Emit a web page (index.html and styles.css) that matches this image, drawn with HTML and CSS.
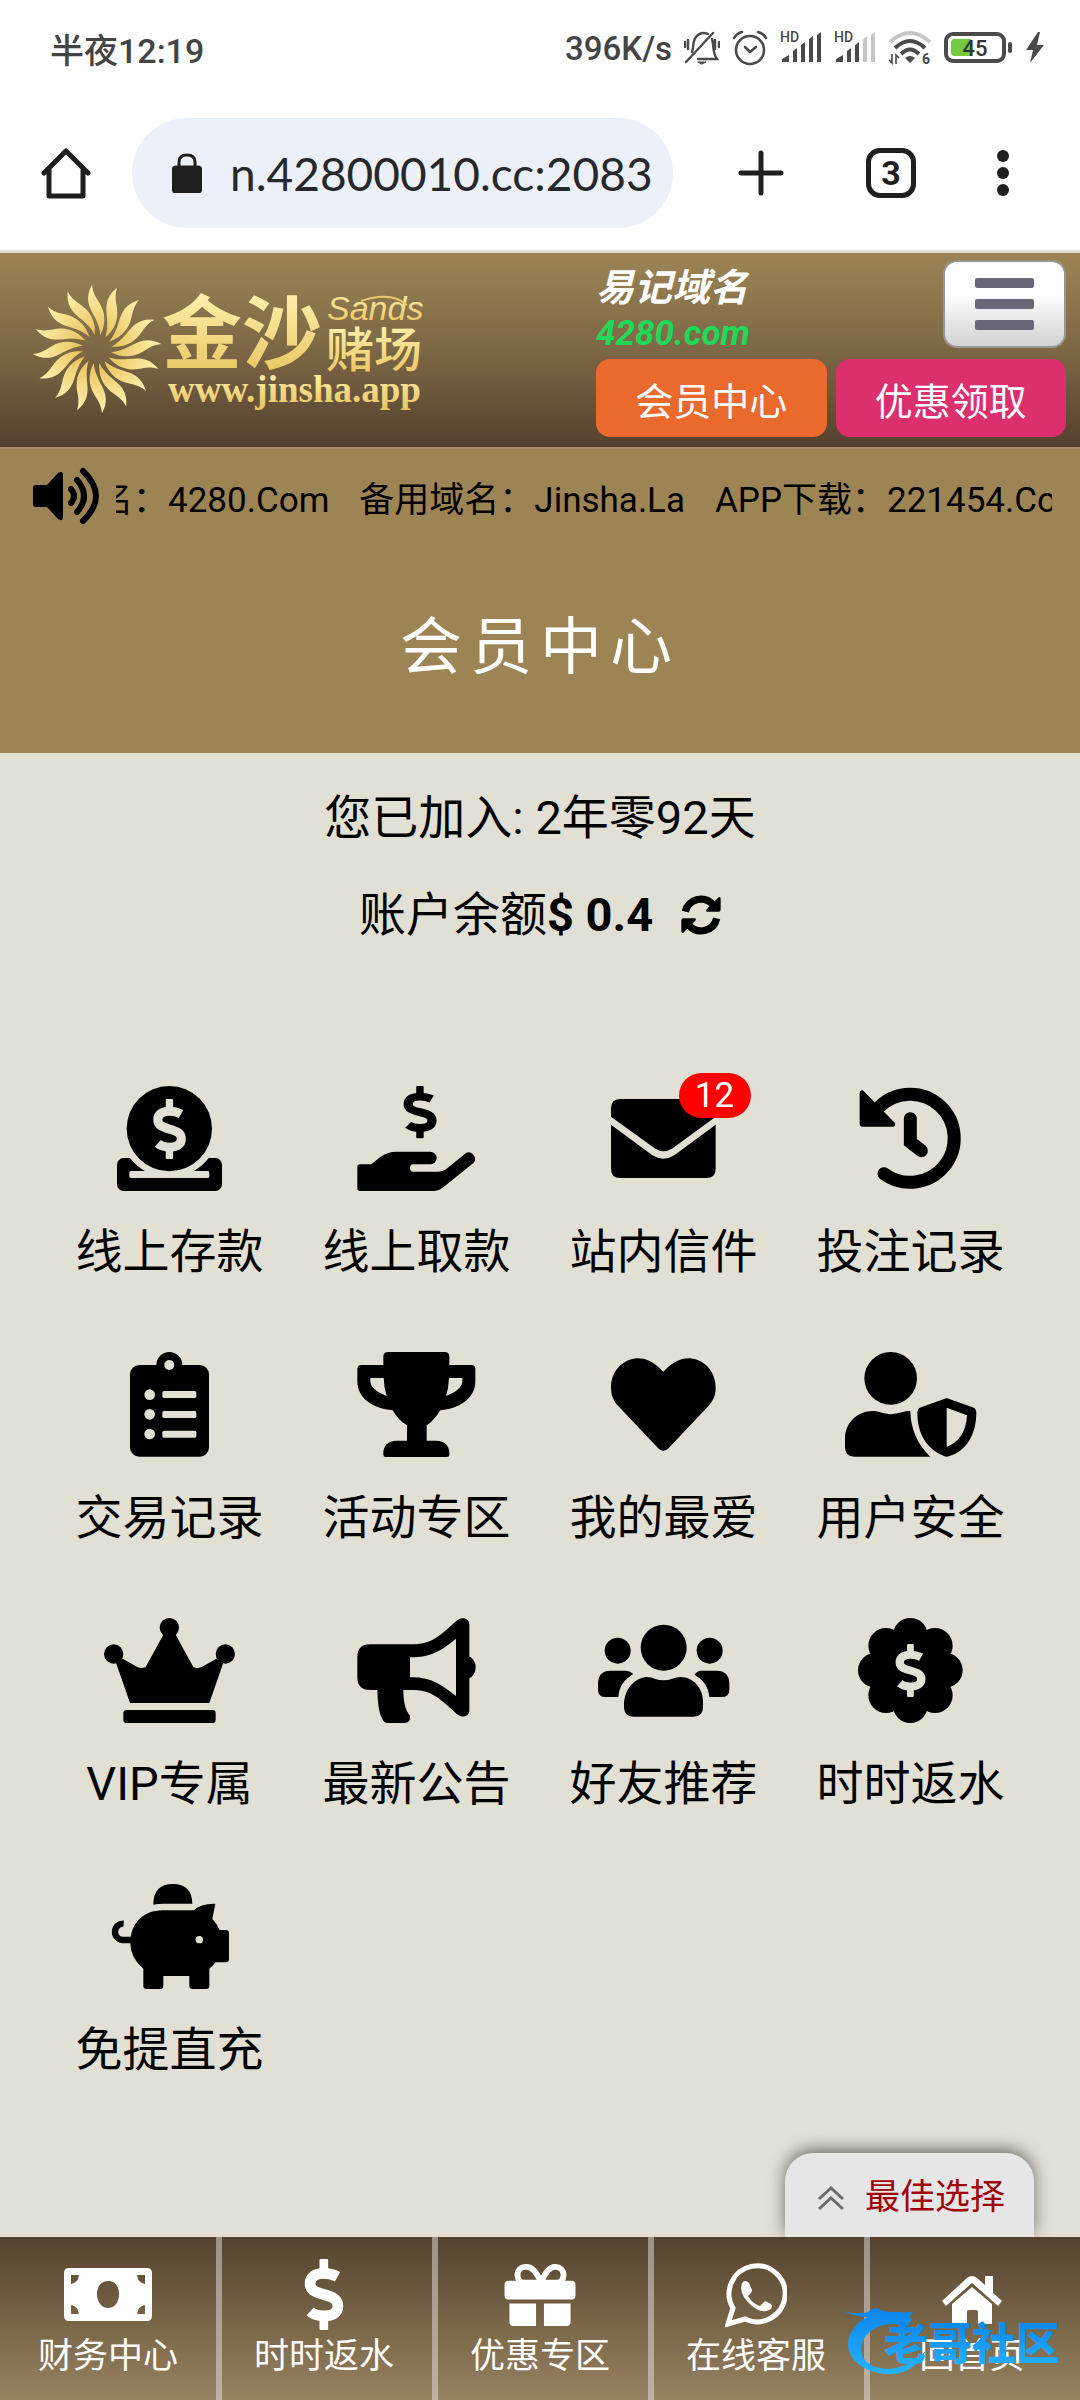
FILE: index.html
```html
<!DOCTYPE html>
<html lang="zh-CN">
<head>
    <meta charset="UTF-8">
    <meta name="viewport" content="width=device-width, initial-scale=1.0">
    <title>会员中心</title>
    <link rel="stylesheet" href="styles.css">
</head>
<body>
    <svg class="defs" width="0" height="0" aria-hidden="true">
        <defs>
            <linearGradient id="gold" x1="0" y1="0" x2="0" y2="1">
                <stop offset="0" stop-color="#fff3b0"/>
                <stop offset="1" stop-color="#e8c25c"/>
            </linearGradient>
            <linearGradient id="blue" x1="0" y1="0" x2="0" y2="1">
                <stop offset="0" stop-color="#0a84ec"/>
                <stop offset="1" stop-color="#25b4ff"/>
            </linearGradient>
            <path id="ray" d="M-15 -193C-38 -150 -22 -125 -8 -98C2 -78 8 -62 10 -42C20 -62 26 -85 19 -112C10 -145 -12 -155 -15 -193Z"/>
            <g id="dollar">
                <path d="M45 32V4q0-4 4-4h18q4 0 4 4v28zM45 180v28q0 4 4 4h18q4 0 4-4v-28z" fill="currentColor"/>
                <path d="M99 53C88 47 76 43 58 43C32 43 17 54 17 73C17 92 30 98 58 106C86 114 100 120 100 141C100 160 84 170 58 170C40 170 26 165 17 157" fill="none" stroke="currentColor" stroke-width="32"/>
            </g>
        </defs>
    </svg>

    <div class="status">
        <span class="time">半夜12:19</span>
        <div class="status-icons">
            <span class="speed">396K/s</span>
            <svg width="36" height="36" viewBox="0 0 36 36" fill="none" stroke="#4a4a4a" stroke-width="2.4" stroke-linecap="round">
                <path d="M2 32L29 3M8 22C10 18 8 12 12 7Q17 1 24 4M28 9C30 15 28 22 33 29H14M1 12v5M4 10v9M31 10v9M35 12v5"/>
                <path d="M14 32h8l-4 2z" fill="#4a4a4a" stroke-width="1"/>
            </svg>
            <svg width="36" height="36" viewBox="0 0 36 36" fill="none" stroke="#4a4a4a" stroke-width="2.6" stroke-linecap="round" stroke-linejoin="round">
                <circle cx="18" cy="20" r="14"/>
                <path d="M13 17l5 5 6-5M2 8Q5 3 10 2M34 8Q31 3 26 2"/>
            </svg>
            <svg width="42" height="36" viewBox="0 0 42 36" fill="#4a4a4a">
                <text x="0" y="12" class="tiny">HD</text>
                <path d="M2 32V29L9 25V32zM13 32V21L17 18V32zM21 32V15L25 12V32zM29 32V9L33 6V32zM37 32V5L41 2V32z"/>
            </svg>
            <svg width="42" height="36" viewBox="0 0 42 36" fill="#4a4a4a">
                <text x="0" y="12" class="tiny">HD</text>
                <path d="M2 32V29L9 25V32zM13 32V21L17 18V32zM21 32V15L25 12V32z"/>
                <path d="M29 32V9L33 6V32zM37 32V5L41 2V32z" fill="#c6c6c6"/>
            </svg>
            <svg width="44" height="40" viewBox="0 -2 44 40" fill="none" stroke="#4a4a4a" stroke-width="4">
                <path d="M2 12Q22-6 42 12" stroke="#c6c6c6"/>
                <path d="M7 18Q22 4 37 18M13 24Q22 15 31 24"/>
                <path d="M17 28Q22 24 27 28L22 33z" fill="#4a4a4a" stroke="none"/>
                <path d="M4 24V33L1 30M8 34V25L11 28" stroke-width="1.6"/>
                <text x="34" y="34" class="tiny-bold" fill="#4a4a4a" stroke="none">6</text>
            </svg>
            <svg width="70" height="36" viewBox="0 0 70 36">
                <rect x="2" y="4" width="58" height="27" rx="7" fill="#fff" stroke="#4a4a4a" stroke-width="4"/>
                <path d="M11 9h16v17H11q-4 0-4-4v-9q0-4 4-4z" fill="#74c83c"/>
                <rect x="64" y="12" width="4" height="11" rx="2" fill="#4a4a4a"/>
                <text x="31" y="26" text-anchor="middle" class="battery">45</text>
            </svg>
            <svg width="18" height="36" viewBox="0 0 18 36" fill="#4a4a4a"><path d="M12 2L0 20H7L4 33 18 15H11L14 2z"/></svg>
        </div>
    </div>

    <div class="browser">
        <button class="icon-btn" aria-label="主页">
            <svg width="50" height="52" viewBox="0 0 50 52" fill="none" stroke="#1f1f1f" stroke-width="5" stroke-linejoin="round" stroke-linecap="round"><path d="M3 26L25 4 47 26M8 23V49H42V23"/></svg>
        </button>
        <div class="address">
            <svg width="30" height="40" viewBox="0 0 30 40" fill="none" stroke="#1f1f1f" stroke-width="3"><rect x="1" y="14" width="28" height="25" rx="3" fill="#1f1f1f"/><path d="M7 15V9Q7 2 15 2T23 9V15"/></svg>
            <input type="text" value="n.42800010.cc:2083" aria-label="网址">
        </div>
        <div class="browser-actions">
            <button class="icon-btn" aria-label="新标签页">
                <svg width="50" height="50" viewBox="0 0 50 50" stroke="#1f1f1f" stroke-width="5" stroke-linecap="round"><path d="M25 5V45M5 25H45"/></svg>
            </button>
            <button class="tabs">3</button>
            <button class="icon-btn" aria-label="菜单">
                <svg width="14" height="48" viewBox="0 0 14 48" fill="#1f1f1f"><circle cx="7" cy="7" r="6"/><circle cx="7" cy="24" r="6"/><circle cx="7" cy="41" r="6"/></svg>
            </button>
        </div>
    </div>

    <header>
        <a class="logo" href="#" aria-label="金沙赌场">
            <svg width="420" height="150" viewBox="0 0 420 150">
                <g fill="url(#gold)" transform="translate(66 75) scale(.3333)">
                    <use href="#ray"/>
                    <use href="#ray" transform="rotate(22.5)"/>
                    <use href="#ray" transform="rotate(45)"/>
                    <use href="#ray" transform="rotate(67.5)"/>
                    <use href="#ray" transform="rotate(90)"/>
                    <use href="#ray" transform="rotate(112.5)"/>
                    <use href="#ray" transform="rotate(135)"/>
                    <use href="#ray" transform="rotate(157.5)"/>
                    <use href="#ray" transform="rotate(180)"/>
                    <use href="#ray" transform="rotate(202.5)"/>
                    <use href="#ray" transform="rotate(225)"/>
                    <use href="#ray" transform="rotate(247.5)"/>
                    <use href="#ray" transform="rotate(270)"/>
                    <use href="#ray" transform="rotate(292.5)"/>
                    <use href="#ray" transform="rotate(315)"/>
                    <use href="#ray" transform="rotate(337.5)"/>
                </g>
                <text x="131" y="88" class="logo-main">金沙</text>
                <text x="296" y="46" class="logo-en">Sands</text>
                <path d="M330 27Q360 17 376 31" fill="none" stroke="#e8c86c" stroke-width="2"/>
                <text x="295" y="93" class="logo-sub">赌场</text>
                <text x="137" y="128" class="logo-url">www.jinsha.app</text>
            </svg>
        </a>
        <div class="header-right">
            <div class="header-top">
                <div class="domain">
                    <span>易记域名</span>
                    <span class="green">4280.com</span>
                </div>
                <button class="menu" aria-label="菜单"><i></i><i></i><i></i></button>
            </div>
            <div class="header-buttons">
                <button class="orange">会员中心</button>
                <button class="pink">优惠领取</button>
            </div>
        </div>
    </header>

    <div class="banner">
        <div class="marquee">
            <svg width="66" height="58" viewBox="0 0 66 58" fill="none" stroke="#000" stroke-width="6" stroke-linecap="round">
                <path d="M3 18H14L25 6Q30 3 30 8V50Q30 55 25 52L14 40H3Q0 40 0 37V21Q0 18 3 18z" fill="#000" stroke="none"/>
                <path d="M38 22Q44 29 38 36M44 13Q58 29 44 45M50 4Q76 29 50 54"/>
            </svg>
            <div class="marquee-text">
                <div class="marquee-inner">
                    <span>易记域名：4280.Com</span>
                    <span>备用域名：Jinsha.La</span>
                    <span>APP下载：221454.Com</span>
                </div>
            </div>
        </div>
        <h1>会员中心</h1>
    </div>

    <main>
        <p>您已加入: 2年零92天</p>
        <p>账户余额<b>$ 0.4</b>
            <button class="refresh" aria-label="刷新">
                <svg width="40" height="40" viewBox="0 0 120 120"><path d="M13 50A48 48 0 0 1 95 28M107 70A48 48 0 0 1 25 92" fill="none" stroke="#000" stroke-width="22"/><path d="M113 7Q119 4 119 12V44Q119 50 112 50H80Q72 50 77 43zM7 113Q1 116 1 108V76Q1 70 8 70H40Q48 70 43 77z"/></svg>
            </button>
        </p>

        <div class="grid">
            <a href="#">
                <svg viewBox="0 0 393 315"><rect x="39" y="216" width="315" height="99" rx="20"/><rect class="hole" x="76" y="255" width="240" height="21" rx="5"/><path class="hole" d="M49 128A147 147 0 0 0 343 128z"/><path d="M60 281H330V295H60z"/><circle cx="196" cy="128" r="128"/><use class="cut" href="#dollar" transform="translate(147 39) scale(.85)"/></svg>
                <span>线上存款</span>
            </a>
            <a href="#">
                <svg viewBox="0 0 393 315"><use href="#dollar" transform="translate(157 0) scale(.86 .74)"/><path d="M27 235H60C80 221 98 197 138 197H238A19 19 0 0 1 238 235H187A10 11 0 0 0 187 257H262Q275 257 285 250L342 203A19 19 0 0 1 368 230L275 305Q263 315 250 315H27Q19 315 19 307V243Q19 235 27 235z"/></svg>
                <span>线上取款</span>
            </a>
            <a href="#" class="has-badge">
                <svg viewBox="0 0 393 315"><path d="M39 92V67Q39 39 67 39H325Q353 39 353 67V92L224 187Q196 205 170 187z"/><path d="M39 116L163 208Q196 228 229 208L353 116V248Q353 276 325 276H67Q39 276 39 248z"/></svg>
                <em class="badge">12</em>
                <span>站内信件</span>
            </a>
            <a href="#">
                <svg viewBox="0 0 393 315"><path d="M104 62A132 132 0 1 1 117 263" class="line" stroke-linecap="round"/><path d="M51 20V115H144z" stroke="#000" stroke-width="14" stroke-linejoin="round"/><path d="M196 98V168L229 194" class="line" stroke-linecap="round"/></svg>
                <span>投注记录</span>
            </a>
            <a href="#">
                <svg viewBox="0 0 393 315"><rect x="78" y="39" width="237" height="275" rx="28"/><circle cx="196" cy="39" r="39"/><g class="hole"><circle cx="196" cy="39" r="15"/><circle cx="137" cy="128" r="16"/><circle cx="137" cy="187" r="16"/><circle cx="137" cy="246" r="16"/><rect x="175" y="117" width="102" height="21" rx="5"/><rect x="175" y="177" width="102" height="21" rx="5"/><rect x="175" y="236" width="102" height="21" rx="5"/></g></svg>
                <span>交易记录</span>
            </a>
            <a href="#">
                <svg viewBox="0 0 393 315"><path fill-rule="evenodd" d="M97 14Q97 0 111 0H281Q295 0 295 14V39H361Q373 39 373 51V88C373 140 325 170 268 175C255 195 243 210 227 220V266H255Q295 268 295 304V308Q295 315 288 315H104Q97 315 97 308V304Q97 268 137 266H168V220C150 210 137 195 125 175C67 170 19 140 19 88V51Q19 39 31 39H97zM58 78H98Q99 108 107 132Q58 113 58 88zM334 78H294Q293 108 285 132Q334 113 334 88z"/></svg>
                <span>活动专区</span>
            </a>
            <a href="#">
                <svg viewBox="0 0 393 315"><path d="M196 59C163 25 140 18 116 19C70 24 39 60 39 108C39 130 47 148 60 161L182 290Q196 302 210 290L332 161C345 148 353 130 353 108C353 60 322 24 277 19C252 18 229 25 196 59z"/></svg>
                <span>我的最爱</span>
            </a>
            <a href="#">
                <svg viewBox="0 0 393 315"><circle cx="137" cy="79" r="79"/><path d="M0 260C0 210 40 177 84 177Q95 177 105 181Q137 192 170 181Q180 177 196 177Q198 260 256 314H28Q0 314 0 286z"/><path fill-rule="evenodd" d="M297 141Q305 136 313 141L383 166Q394 170 394 182C394 245 365 297 313 312Q305 316 297 312C245 290 217 245 217 182Q217 170 228 166zM305 167L366 190C364 240 340 272 305 285z"/></svg>
                <span>用户安全</span>
            </a>
            <a href="#">
                <svg viewBox="0 0 393 315"><circle cx="196" cy="29" r="29"/><circle cx="29" cy="108" r="29"/><circle cx="364" cy="108" r="29"/><path d="M36 134L56 122L100 147Q114 153 125 147L178 50H215L268 147Q279 153 293 147L337 122L358 134L316 255H78z"/><rect x="58" y="276" width="277" height="39" rx="10"/></svg>
                <span>VIP专属</span>
            </a>
            <a href="#">
                <svg viewBox="0 0 393 315"><path fill-rule="evenodd" d="M57 79H190C252 79 285 33 323 4C338 -5 355 4 355 18V278C355 292 338 301 323 292C285 262 252 216 190 216H57Q19 216 19 178V117Q19 79 57 79zM177 118V178C240 176 270 200 315 234V62C270 98 240 118 177 118z"/><path d="M79 210Q80 280 94 303Q99 315 110 315H160Q180 314 177 293Q156 270 157 210zM353 114Q374 124 374 148Q374 172 353 182z"/></svg>
                <span>最新公告</span>
            </a>
            <a href="#">
                <svg viewBox="0 0 393 315"><circle cx="197" cy="89" r="69"/><circle cx="59" cy="98" r="39"/><circle cx="335" cy="98" r="39"/><path d="M38 158H83Q95 158 106 168Q64 192 61 237H22Q0 237 0 215V198Q0 158 38 158zM355 158H310Q298 158 289 170Q330 192 334 237H371Q394 237 394 215V198Q394 158 355 158z"/><path d="M78 262C78 205 120 177 147 177Q160 177 170 182Q197 191 223 182Q233 177 248 177C285 177 315 210 315 250V268Q315 296 287 296H106Q78 296 78 268z"/></svg>
                <span>好友推荐</span>
            </a>
            <a href="#">
                <svg viewBox="0 0 393 315"><circle cx="196" cy="157" r="110"/><circle cx="196" cy="52" r="52"/><circle cx="196" cy="263" r="52"/><circle cx="91" cy="157" r="52"/><circle cx="301" cy="157" r="52"/><circle cx="123" cy="83" r="53"/><circle cx="270" cy="83" r="53"/><circle cx="123" cy="232" r="53"/><circle cx="270" cy="232" r="53"/><use class="cut" href="#dollar" transform="translate(151 78) scale(.78 .75)"/></svg>
                <span>时时返水</span>
            </a>
            <a href="#">
                <svg viewBox="0 0 393 315"><path d="M148 62Q148 0 206 0T265 59Q206 59 180 59Q160 59 148 62z"/><path d="M79 178C79 115 120 80 175 79H270Q290 58 334 59L325 105Q340 120 347 138H366Q375 138 375 147V226Q375 235 366 235H335Q325 247 316 254V306Q316 315 307 315H265Q256 315 256 306V276H178V306Q178 315 169 315H127Q118 315 118 306V254Q79 222 79 178z"/><circle class="hole" cx="286" cy="167" r="11"/><path d="M84 168H56A24 24 0 0 1 59 119" fill="none" stroke="#000" stroke-width="19"/></svg>
                <span>免提直充</span>
            </a>
        </div>
    </main>

    <nav>
        <a href="#" class="best">
            <svg width="26" height="26" viewBox="0 0 26 26" fill="none" stroke="#6c6c6c" stroke-width="3"><path d="M1 14L13 3 25 14M1 24L13 13 25 24"/></svg>
            最佳选择
        </a>
        <a href="#">
            <svg width="88" height="71" viewBox="0 0 88 71" fill="#fff"><path fill-rule="evenodd" d="M5 9H83Q88 9 88 14V57Q88 62 83 62H5Q0 62 0 57V14Q0 9 5 9zM7 16V25Q14 24 15 16zM81 16V25Q74 24 73 16zM7 55V46Q14 47 15 55zM81 55V46Q74 47 73 55zM44 22C37 22 33 28 33 35S37 49 44 49 55 43 55 35 51 22 44 22z"/></svg>
            <span>财务中心</span>
        </a>
        <a href="#">
            <svg class="white" width="40" height="71" viewBox="0 0 117 212"><use href="#dollar"/></svg>
            <span>时时返水</span>
        </a>
        <a href="#">
            <svg width="72" height="71" viewBox="0 0 72 72" fill="#fff"><path d="M4 22H68Q72 22 72 26V37Q72 41 68 41H4Q0 41 0 37V26Q0 22 4 22zM5 45H32V68H9Q5 68 5 64zM40 45H67V64Q67 68 63 68H40z"/><path d="M35 24H20C11 24 10 8 22 8C29 8 33 15 37 23C41 15 45 8 51 8C63 8 62 24 53 24z" fill="none" stroke="#fff" stroke-width="6"/></svg>
            <span>优惠专区</span>
        </a>
        <a href="#">
            <svg width="62" height="71" viewBox="0 0 62 71"><path d="M3 65L8 49A28 28 0 1 1 20 60z" fill="none" stroke="#fff" stroke-width="5"/><path d="M17 24Q20 20 24 24L27 31Q27 34 23 37Q28 45 35 47L40 42L46 45Q49 49 44 51Q37 55 27 47Q13 35 17 24z" fill="#fff"/></svg>
            <span>在线客服</span>
        </a>
        <a href="#">
            <svg width="60" height="71" viewBox="0 3 60 71" fill="#fff"><path d="M0 45L25 22Q30 18 35 22L43 29V20H51V37L60 45L56 50L30 27L4 50z"/><path d="M10 48L30 31L50 48V68H36V56Q36 54 34 54H27Q25 54 25 56V68H10z"/></svg>
            <span>回首页</span>
        </a>
        <svg class="watermark" width="230" height="80" viewBox="0 0 230 80" fill="url(#blue)">
            <path d="M1 6Q14 10 26 7Q34 0 40 6Q56 8 72 7Q64 12 70 14L66 21Q46 16 32 24C15 34 14 56 34 62C54 68 70 58 84 46C74 64 60 70 46 69C14 68 -2 44 10 26Q18 14 26 12Q14 12 1 6z"/>
            <text x="42" y="55">老哥社区</text>
        </svg>
    </nav>
</body>
</html>
```
FILE: styles.css
```css
* {
    box-sizing: border-box;
}
body {
    margin: 0;
    min-height: 100vh;
    display: flex;
    flex-direction: column;
    background: #e2e0d5;
    color: #000;
    font-family: Roboto, "Noto Sans CJK SC", sans-serif;
    font-size: 47px;
}
button {
    font-family: inherit;
    border: none;
    padding: 0;
    background: none;
    cursor: pointer;
}
a {
    color: inherit;
    text-decoration: none;
}
svg {
    display: block;
}
.defs {
    position: absolute;
}

/* phone status bar */
.status {
    display: flex;
    justify-content: space-between;
    align-items: center;
    height: 96px;
    padding: 0 36px 0 50px;
    background: #fff;
    color: #444;
    font-size: 34px;
    font-weight: 500;
}
.status-icons {
    display: flex;
    align-items: center;
    gap: 12px;
}
.speed {
    font-size: 33px;
}
.tiny {
    font-size: 14px;
}
.tiny-bold {
    font-size: 14px;
    font-weight: 700;
}
.battery {
    font-size: 22px;
    fill: #333;
}

/* browser bar */
.browser {
    display: flex;
    align-items: center;
    padding: 22px 70px 22px 41px;
    background: #fff;
    border-bottom: 3px solid #e0dfd4;
}
.address {
    flex: 1;
    min-width: 0;
    display: flex;
    align-items: center;
    gap: 28px;
    height: 110px;
    margin: 0 63px 0 41px;
    padding: 0 20px 0 40px;
    border-radius: 55px;
    background: #ecf0f9;
}
.address input {
    flex: 1;
    min-width: 0;
    border: none;
    padding: 0;
    background: none;
    color: #26282b;
    font-family: Lato, sans-serif;
    font-size: 46px;
}
.browser-actions {
    display: flex;
    align-items: center;
    gap: 80px;
}
.tabs {
    width: 50px;
    height: 50px;
    border: 5px solid #1f1f1f;
    border-radius: 14px;
    color: #1f1f1f;
    font-size: 34px;
    font-weight: 700;
    line-height: 40px;
}

/* site header */
header {
    display: flex;
    justify-content: space-between;
    background: linear-gradient(#9c8454, #7c6845 50%, #54402e);
    border-bottom: 2px solid #a58b67;
    padding: 7px 14px 10px 31px;
}
.logo {
    padding-top: 14px;
}
.logo text {
    fill: url(#gold);
}
.logo-main {
    font-size: 80px;
    font-weight: 700;
}
.logo-en {
    font-family: "Liberation Sans", sans-serif;
    font-size: 34px;
    font-style: italic;
}
.logo-sub {
    font-size: 48px;
    font-weight: 500;
}
.logo-url {
    font-family: "Liberation Serif", serif;
    font-size: 37px;
    font-weight: 700;
}
.header-right {
    width: 470px;
}
.header-top {
    display: flex;
    justify-content: space-between;
    align-items: flex-start;
}
.domain {
    display: flex;
    flex-direction: column;
    padding-top: 5px;
    color: #fff;
    font-size: 38px;
    font-style: italic;
    font-weight: 700;
    line-height: 46px;
}
.domain .green {
    color: #22d85a;
    font-size: 35px;
}
.menu {
    display: flex;
    flex-direction: column;
    align-items: center;
    justify-content: center;
    gap: 11px;
    width: 123px;
    height: 88px;
    border: 2px solid #999590;
    border-radius: 14px;
    background: linear-gradient(#fdfdfd 40%, #d2d2d2);
}
.menu i {
    width: 59px;
    height: 10px;
    border-radius: 2px;
    background: #686878;
}
.header-buttons {
    display: grid;
    grid-template-columns: 1fr 1fr;
    gap: 9px;
    margin-top: 2px;
}
.header-buttons button {
    height: 78px;
    border-radius: 14px;
    color: #fff;
    font-size: 38px;
}
.orange {
    background: #ea692c;
}
.pink {
    background: #dc306e;
}

.banner {
    background: #9c8454;
}
.marquee {
    display: flex;
    align-items: center;
    gap: 17px;
    height: 94px;
    padding: 0 28px 0 33px;
}
.marquee svg {
    flex: none;
}
.marquee-text {
    flex: 1;
    min-width: 0;
    overflow: hidden;
    font-size: 35px;
}
.marquee-inner {
    display: flex;
    gap: 30px;
    margin-left: -123px;
    white-space: nowrap;
}
h1 {
    margin: 0;
    padding: 80px 0;
    color: #fff;
    font-size: 62px;
    font-weight: 400;
    line-height: 50px;
    letter-spacing: 8px;
    text-align: center;
}

main {
    flex: 1;
    padding: 16px 46px 60px;
}
p {
    display: flex;
    justify-content: center;
    align-items: center;
    margin: 0;
    line-height: 97px;
}
.refresh {
    margin-left: 28px;
}
.grid {
    display: grid;
    grid-template-columns: repeat(4, 1fr);
    row-gap: 69px;
    padding-top: 123px;
}
.grid a {
    position: relative;
    display: flex;
    flex-direction: column;
    align-items: center;
    gap: 30px;
    line-height: 62px;
}
.grid svg {
    width: 131px;
    height: 105px;
    overflow: visible;
}
.hole {
    fill: #e2e0d5;
}
.cut {
    color: #e2e0d5;
}
.line {
    fill: none;
    stroke: #000;
    stroke-width: 39px;
}
.badge {
    position: absolute;
    top: -13px;
    left: calc(50% + 15px);
    width: 72px;
    height: 45px;
    border-radius: 23px;
    background: #f00;
    color: #fff;
    font-size: 35px;
    font-style: normal;
    line-height: 46px;
    text-align: center;
}

/* bottom menu */
nav {
    position: relative;
    display: grid;
    grid-template-columns: repeat(5, 1fr);
    border-top: 3px solid #e6dccf;
    background: linear-gradient(#54422f, #7a6748 55%, #978262);
}
nav a {
    display: flex;
    flex-direction: column;
    align-items: center;
    gap: 2px;
    padding: 22px 0 18px;
    color: #fff;
    font-size: 35px;
    line-height: 50px;
}
nav a svg {
    height: 71px;
}
nav .white {
    color: #fff;
}
nav a + a + a {
    box-shadow: inset 6px 0 rgba(230, 225, 225, 0.5);
}
nav .best {
    position: absolute;
    right: 46px;
    bottom: 100%;
    flex-direction: row;
    gap: 21px;
    padding: 20px 29px 14px 33px;
    border-radius: 28px 28px 0 0;
    background: #e6e6e6;
    box-shadow: 0 -4px 16px rgba(0, 0, 0, 0.5);
    color: #a00008;
    clip-path: inset(-30px -30px 0 -30px);
}
nav .best svg {
    height: 26px;
}
.watermark {
    position: absolute;
    right: 8px;
    bottom: 15px;
    pointer-events: none;
}
.watermark text {
    font-size: 44px;
    font-weight: 900;
}
```
